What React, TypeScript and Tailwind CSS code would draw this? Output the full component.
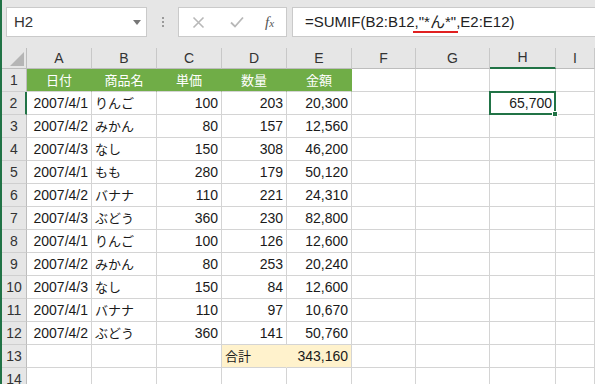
import React from "react";

const latin = "font-['Liberation_Sans','Noto_Sans_CJK_JP',sans-serif]";
const jp = "font-['Noto_Sans_CJK_JP',sans-serif]";

type Row = [string, string, number, number];

const rows: Row[] = [
  ["2007/4/1", "りんご", 100, 203],
  ["2007/4/2", "みかん", 80, 157],
  ["2007/4/3", "なし", 150, 308],
  ["2007/4/1", "もも", 280, 179],
  ["2007/4/2", "バナナ", 110, 221],
  ["2007/4/3", "ぶどう", 360, 230],
  ["2007/4/1", "りんご", 100, 126],
  ["2007/4/2", "みかん", 80, 253],
  ["2007/4/3", "なし", 150, 84],
  ["2007/4/1", "バナナ", 110, 97],
  ["2007/4/2", "ぶどう", 360, 141],
];

const fmt = (n: number) => n.toLocaleString("en-US");

const cols = [
  { key: "A", w: "w-[65px]" },
  { key: "B", w: "w-[65px]" },
  { key: "C", w: "w-[65px]" },
  { key: "D", w: "w-[65px]" },
  { key: "E", w: "w-[65px]" },
  { key: "F", w: "w-[64px]" },
  { key: "G", w: "w-[74px]" },
  { key: "H", w: "w-[66px]" },
  { key: "I", w: "flex-1" },
];

const RowHead: React.FC<{ n: number; active?: boolean }> = ({ n, active }) => (
  <div
    className={`w-[25px] shrink-0 h-full flex items-center justify-center bg-[#e6e6e6] text-[14px] text-[#333] border-b border-[#cfcfcf] ${
      active ? "border-r-2 border-r-[#217346]" : "border-r border-r-[#bdbdbd]"
    }`}
  >
    {n}
  </div>
);

const Cell: React.FC<{
  w: string;
  children?: React.ReactNode;
  align?: "l" | "r" | "c";
  cls?: string;
}> = ({ w, children, align = "l", cls = "" }) => (
  <div
    className={`${w} shrink-0 h-full border-r border-b border-[#d4d4d4] flex items-center px-[3px] text-[14px] text-[#1a1a1a] ${
      align === "r" ? "justify-end" : align === "c" ? "justify-center" : "justify-start"
    } ${cls}`}
  >
    {children}
  </div>
);

export default function App() {
  return (
    <div className={`w-[595px] h-[384px] overflow-hidden flex bg-white ${latin}`}>
      <div className="w-[2px] shrink-0 bg-[#217346]" />
      <div className="flex-1 flex flex-col min-w-0">
        {/* formula bar */}
        <div className="h-[48px] shrink-0 bg-[#e6e6e6] flex items-start pt-[7px] pl-[4px]">
          <div className="w-[141px] h-[30px] bg-white border border-[#cacaca] flex items-center justify-between pl-[7px] pr-[5px]">
            <span className="text-[15px] text-[#333]">H2</span>
            <svg width="8" height="5" viewBox="0 0 8 5">
              <path d="M0 0h8L4 5z" fill="#777" />
            </svg>
          </div>
          <div className="w-[31px] h-[30px] flex flex-col items-center justify-center gap-[2px]">
            <span className="w-[2px] h-[2px] bg-[#9a9a9a]" />
            <span className="w-[2px] h-[2px] bg-[#9a9a9a]" />
            <span className="w-[2px] h-[2px] bg-[#9a9a9a]" />
          </div>
          <div className="w-[109px] h-[30px] bg-white border border-[#cacaca] flex items-center pl-[13px]">
            <svg width="13" height="13" viewBox="0 0 13 13" className="mr-[25px]">
              <path d="M1.5 1.5l10 10M11.5 1.5l-10 10" stroke="#b8b8b8" strokeWidth="1.6" />
            </svg>
            <svg width="14" height="12" viewBox="0 0 14 12" className="mr-[21px]">
              <path d="M1 6.5l4 4L13 1.5" stroke="#b8b8b8" strokeWidth="1.8" fill="none" />
            </svg>
            <span className="font-['Liberation_Serif',serif] italic text-[15px] text-[#555] leading-none">
              f<span className="text-[11px]">x</span>
            </span>
          </div>
          <div className="ml-[5px] flex-1 h-[30px] bg-white border border-r-0 border-[#cacaca] flex items-center pl-[12px]">
            <span className="text-[15px] text-[#222] whitespace-nowrap">
              =SUMIF(B2:B12,
              <span className="relative">
                "*<span className={jp}>ん</span>*"
                <span className="absolute left-[-6px] right-[-2px] bottom-[-3px] h-[2px] bg-[#e02020]" />
              </span>
              ,E2:E12)
            </span>
          </div>
        </div>

        {/* column headers */}
        <div className="h-[21px] shrink-0 flex bg-[#e6e6e6]">
          <div className="w-[25px] shrink-0 h-full border-r border-b border-[#bdbdbd] relative">
            <svg width="14" height="14" viewBox="0 0 14 14" className="absolute right-[2px] bottom-[2px]">
              <path d="M14 0V14H0z" fill="#b5b5b5" />
            </svg>
          </div>
          {cols.map((c) => (
            <div
              key={c.key}
              className={`${c.w} shrink-0 h-full flex items-center justify-center text-[14px] text-[#333] border-r border-[#c8c8c8] ${
                c.key === "H" ? "border-b-2 border-b-[#217346]" : "border-b border-b-[#bdbdbd]"
              }`}
            >
              {c.key}
            </div>
          ))}
        </div>

        {/* row 1 header */}
        <div className="h-[23px] shrink-0 flex">
          <RowHead n={1} />
          {["日付", "商品名", "単価", "数量", "金額"].map((t) => (
            <Cell key={t} w="w-[65px]" align="c" cls={`bg-[#70ad47] !text-white ${jp} !text-[13px] border-r-[#70ad47] border-b-[#d4d4d4]`}>
              {t}
            </Cell>
          ))}
          <Cell w="w-[64px]" />
          <Cell w="w-[74px]" />
          <Cell w="w-[66px]" />
          <Cell w="flex-1" />
        </div>

        {rows.map((r, i) => {
          const n = i + 2;
          return (
            <div key={n} className="h-[23px] shrink-0 flex">
              <RowHead n={n} active={n === 2} />
              <Cell w="w-[65px]" align="r">{r[0]}</Cell>
              <Cell w="w-[65px]" cls={`${jp} !text-[13px]`}>{r[1]}</Cell>
              <Cell w="w-[65px]" align="r">{r[2]}</Cell>
              <Cell w="w-[65px]" align="r">{r[3]}</Cell>
              <Cell w="w-[65px]" align="r">{fmt(r[2] * r[3])}</Cell>
              <Cell w="w-[64px]" />
              <Cell w="w-[74px]" />
              {n === 2 ? (
                <Cell w="w-[66px]" align="r" cls="relative">
                  65,700
                  <div className="absolute left-[-1px] top-[-1px] right-[-1px] bottom-[-1px] border-2 border-[#217346]" />
                  <div className="absolute right-[-3px] bottom-[-3px] w-[6px] h-[6px] bg-[#217346] border border-white" />
                </Cell>
              ) : (
                <Cell w="w-[66px]" />
              )}
              <Cell w="flex-1" />
            </div>
          );
        })}

        {/* total row */}
        <div className="h-[23px] shrink-0 flex">
          <RowHead n={13} />
          <Cell w="w-[65px]" />
          <Cell w="w-[65px]" />
          <Cell w="w-[65px]" />
          <Cell w="w-[65px]" cls={`bg-[#fff2cc] border-r-[#fff2cc] ${jp} !text-[13px]`}>合計</Cell>
          <Cell w="w-[65px]" align="r" cls="bg-[#fff2cc]">343,160</Cell>
          <Cell w="w-[64px]" />
          <Cell w="w-[74px]" />
          <Cell w="w-[66px]" />
          <Cell w="flex-1" />
        </div>

        <div className="h-[23px] shrink-0 flex">
          <RowHead n={14} />
          {cols.map((c) => (
            <Cell key={c.key} w={c.w} />
          ))}
        </div>
      </div>
    </div>
  );
}
